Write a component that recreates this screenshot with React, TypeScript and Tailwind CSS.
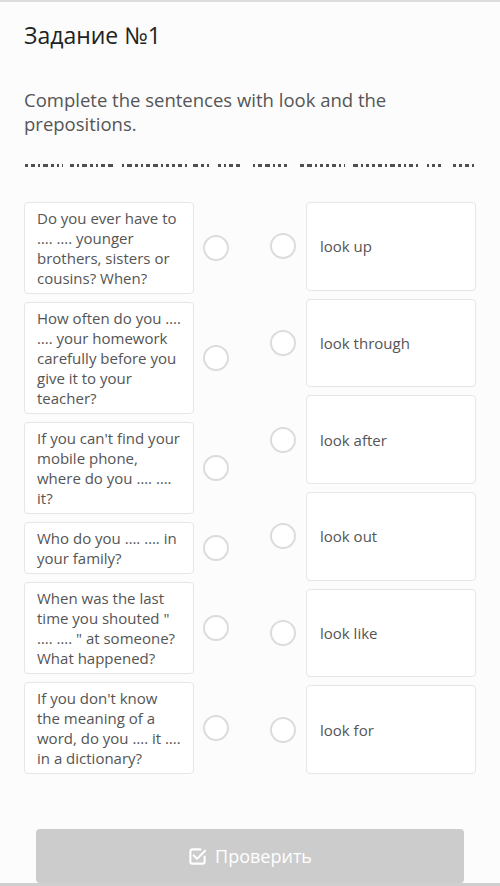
import React from "react";

const left = [
  "Do you ever have to …. …. younger brothers, sisters or cousins? When?",
  "How often do you …. …. your homework carefully before you give it to your teacher?",
  "If you can't find your mobile phone, where do you …. …. it?",
  "Who do you …. …. in your family?",
  'When was the last time you shouted " …. …. " at someone? What happened?',
  "If you don't know the meaning of a word, do you …. it …. in a dictionary?",
];

const right = ["look up", "look through", "look after", "look out", "look like", "look for"];

const groups: [number, number][] = [
  [25, 63], [70, 113], [122, 187], [193, 210], [218, 240],
  [253, 290], [300, 345], [353, 418], [427, 443], [453, 477],
];
const pattern = [3, 4, 2, 5, 3, 2, 4, 5, 2, 3];

function Dashes() {
  const rects: React.ReactNode[] = [];
  let k = 0;
  groups.forEach(([s, e], gi) => {
    let x = s;
    let i = gi;
    while (x < e) {
      const w = Math.min(pattern[i % pattern.length], e - x);
      rects.push(<rect key={k++} x={x} y={0} width={w} height={3} fill="#505050" />);
      x += w + 3;
      i++;
    }
  });
  return (
    <svg width="500" height="3" className="block -mx-6">
      {rects}
    </svg>
  );
}

function Radio() {
  return <div className="w-[26px] h-[26px] shrink-0 rounded-full border-2 border-[#dcdcdc] bg-white" />;
}

function CheckIcon() {
  return (
    <svg width="19" height="19" viewBox="0 0 20 20" fill="none" stroke="white" strokeWidth="2.2" strokeLinecap="round" strokeLinejoin="round">
      <path d="M13 2.5H4.5a2 2 0 0 0-2 2v11a2 2 0 0 0 2 2h11a2 2 0 0 0 2-2V10" />
      <path d="M6 9l3.5 3.5L18 4" />
    </svg>
  );
}

export default function App() {
  return (
    <div
      className="w-[500px] h-[886px] bg-[#fcfcfc] border-t-2 border-[#dddddd] flex flex-col overflow-hidden"
      style={{ fontFamily: '"Open Sans", "Noto Sans", sans-serif' }}
    >
      <div className="px-6 pt-[17px] flex-1 flex flex-col">
        <h1 className="text-[23px] leading-[32px] text-[#222222] font-normal">Задание №1</h1>
        <p className="mt-[37px] text-[18.5px] leading-[24px] text-[#555555]">
          Complete the sentences with look and the prepositions.
        </p>
        <div className="mt-[28px]">
          <Dashes />
        </div>
        <div className="mt-[35px] flex justify-between">
          <div className="flex flex-col gap-2">
            {left.map((t, i) => (
              <div key={i} className="flex items-center">
                <div className="w-[170px] bg-white border border-[#e6e6e6] rounded-[4px] pl-[12px] pr-[12px] py-[5px] text-[15px] leading-[20px] text-[#555555]">
                  {t}
                </div>
                <div className="ml-[9px]">
                  <Radio />
                </div>
              </div>
            ))}
          </div>
          <div className="flex flex-col gap-2">
            {right.map((t, i) => (
              <div key={i} className="flex-1 flex items-center">
                <Radio />
                <div className="ml-[10px] w-[170px] self-stretch flex items-center bg-white border border-[#e6e6e6] rounded-[4px] pl-[13px] text-[15px] leading-[20px] text-[#555555]">
                  {t}
                </div>
              </div>
            ))}
          </div>
        </div>
        <div className="mt-auto px-3">
          <div className="h-[54px] bg-[#cccccc] rounded-[4px] flex items-center justify-center gap-[8px] text-white text-[18px]">
            <CheckIcon />
            <span>Проверить</span>
          </div>
        </div>
      </div>
      <div className="h-[3px] bg-[#cfcfcf]" />
    </div>
  );
}
